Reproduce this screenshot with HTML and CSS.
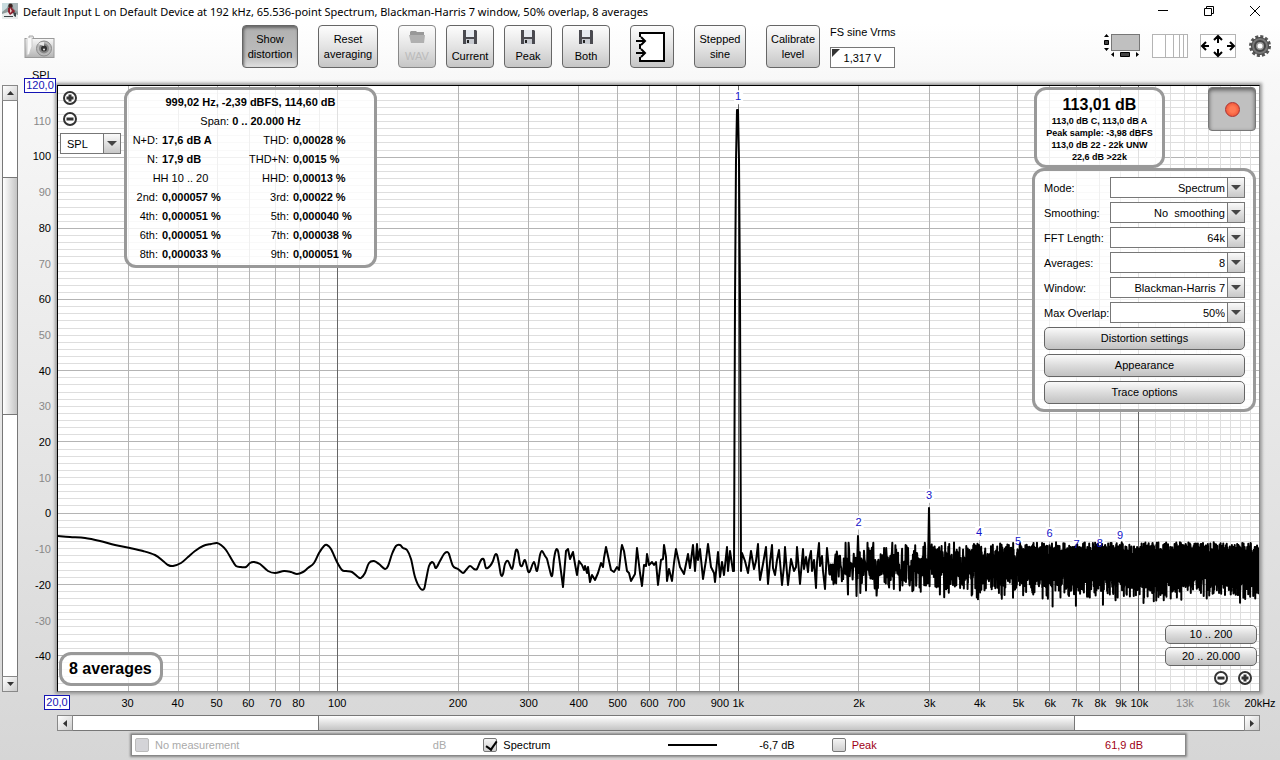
FILE: index.html
```html
<!DOCTYPE html>
<html lang="en">
  <head>
    <meta charset="UTF-8" />
    <meta name="viewport" content="width=device-width, initial-scale=1.0" />
    <title>RTA</title>
    <link rel="stylesheet" href="styles.css">
  </head>
  <body>
    <header class="titlebar">
      <svg class="app-icon" width="16" height="16" viewBox="0 0 16 16">
        <rect x="0" y="0" width="16" height="16" fill="#8d9a9a"></rect>
        <path d="M0 0h7l-2 5-5 4z" fill="#c9dcdf"></path>
        <path d="M10 0h6v9l-4-3z" fill="#a9b5b8"></path>
        <circle cx="8.500" cy="3" r="2.200" fill="#3a2220"></circle>
        <path d="M6 5l3-1 4 4-2 4H6z" fill="#8c2230"></path>
        <path d="M8 5l2 3-2 2z" fill="#e6cfc9"></path>
        <path d="M0 11l6-2 2 3 3-2 5 2v4H0z" fill="#e8ecec"></path>
        <path d="M2 13h9v1H2zM11 9l3 1v4l-2-1z" fill="#3c4446"></path>
      </svg>
      <span class="titlebar-text">Default Input L on Default Device at 192 kHz, 65.536-point Spectrum, Blackman-Harris 7 window, 50% overlap, 8 averages</span>
      <div class="window-buttons">
        <button class="plain" aria-label="Minimize">
          <svg width="12" height="12" viewBox="0 0 12 12" fill="none" stroke="#000"><path d="M1 5.500h10"></path></svg>
        </button>
        <button class="plain" aria-label="Restore">
          <svg width="12" height="12" viewBox="0 0 12 12" fill="none" stroke="#000"><path d="M1.500 3.500h7v7h-7zM3.500 3.500v-2h7v7h-2"></path></svg>
        </button>
        <button class="plain" aria-label="Close">
          <svg width="12" height="12" viewBox="0 0 12 12" fill="none" stroke="#000"><path d="M1 1l10 10M11 1L1 11"></path></svg>
        </button>
      </div>
    </header>

    <div class="toolbar">
      <button class="plain camera" aria-label="Capture image">
        <svg width="31" height="24" viewBox="0 0 31 24">
          <defs>
            <linearGradient id="cam" x1="0" y1="0" x2="0" y2="1">
              <stop offset="0" stop-color="#f8f8f8"></stop>
              <stop offset="1" stop-color="#b4b4b4"></stop>
            </linearGradient>
          </defs>
          <path d="M5 1h4l1 3H5z" fill="#e4e4e4" stroke="#aaa"></path>
          <rect x="1" y="3.500" width="29" height="19" fill="url(#cam)" stroke="#9a9a9a"></rect>
          <path d="M3 3v17c3 1 3-5 5-8V3" fill="#fafafa" stroke="#ccc"></path>
          <circle cx="20" cy="13.500" r="7.500" fill="#b9b9b9" stroke="#8a8a8a"></circle>
          <circle cx="20" cy="13.500" r="5" fill="#888"></circle>
          <circle cx="20" cy="13.500" r="3" fill="#333"></circle>
          <path d="M14 9a7 7 0 0 1 6-2v4z" fill="#e8e8e8"></path>
          <circle cx="20" cy="14.500" r="1" fill="#eee"></circle>
        </svg>
      </button>

      <div class="tools">
        <button class="tool pressed">Show<br>distortion</button>
        <button class="tool reset">Reset<br>averaging</button>
        <div class="save-tools">
          <button class="tool wav" disabled>
            <svg width="18" height="16" viewBox="0 0 18 16"><path d="M2 3l1-1h5l1 1h7v4H2z" fill="#989898"></path><path d="M1 6h16l-1 8H3z" fill="#b0b0b0"></path></svg>
            WAV
          </button>
          <button class="tool save">
            <svg width="16" height="16" viewBox="0 0 16 16"><path d="M1 1h13l1 1v13H1z" fill="#4a4a50"></path><path d="M4 1h8v7H4z" fill="#e6eaf0"></path><path d="M4 10h8v5H4z" fill="#c9ccd2"></path><path d="M5 11h2v3H5z" fill="#222"></path></svg>
            Current
          </button>
          <button class="tool save">
            <svg width="16" height="16" viewBox="0 0 16 16"><path d="M1 1h13l1 1v13H1z" fill="#4a4a50"></path><path d="M4 1h8v7H4z" fill="#e6eaf0"></path><path d="M4 10h8v5H4z" fill="#c9ccd2"></path><path d="M5 11h2v3H5z" fill="#222"></path></svg>
            Peak
          </button>
          <button class="tool save">
            <svg width="16" height="16" viewBox="0 0 16 16"><path d="M1 1h13l1 1v13H1z" fill="#4a4a50"></path><path d="M4 1h8v7H4z" fill="#e6eaf0"></path><path d="M4 10h8v5H4z" fill="#c9ccd2"></path><path d="M5 11h2v3H5z" fill="#222"></path></svg>
            Both
          </button>
        </div>
        <button class="tool inputs" aria-label="Input channels">
          <svg width="32" height="32" viewBox="0 0 32 32" fill="none" stroke="#000" stroke-width="2">
            <path d="M5 3h23v26H5z" fill="#fff" stroke="none"></path>
            <path d="M4 6V2h24v28H4v-4M4 13v5"></path>
            <path d="M0 10h9M5 6l4 4-4 4M0 22h9M5 18l4 4-4 4"></path>
          </svg>
        </button>
        <button class="tool stepped">Stepped<br>sine</button>
        <button class="tool calibrate">Calibrate<br>level</button>
        <div class="fs-sine">
          <label for="vrms">FS sine Vrms</label>
          <div class="vrms-box"><input id="vrms" type="text" value="1,317 V"></div>
        </div>
      </div>

      <div class="view-tools">
        <button class="plain" aria-label="Show scrollbars">
          <svg width="36" height="24" viewBox="0 0 36 24">
            <rect x="7.500" y="0.500" width="28" height="16" fill="#c0c0c0" stroke="#777"></rect>
            <path d="M0 3l2.500-3L5 3zM0 14l2.500 3L5 14zM10 18v5l-3-2.500zM32 18v5l3-2.500z" fill="#000"></path>
            <path d="M.500 6.500h4v4h-4zM16.500 18.500h9v4h-9z" fill="#444" stroke="#000"></path>
          </svg>
        </button>
        <button class="plain" aria-label="Frequency axis">
          <svg width="36" height="24" viewBox="0 0 36 24" fill="#fff" stroke="#b4b4b4">
            <rect x="0.500" y="0.500" width="35" height="23"></rect>
            <path d="M13.500 0v24M21.500 0v24M27.500 0v24M31.500 0v24"></path>
          </svg>
        </button>
        <button class="plain" aria-label="Graph limits">
          <svg width="36" height="24" viewBox="0 0 36 24">
            <rect x="0.500" y="0.500" width="35" height="23" fill="#fff" stroke="#b4b4b4"></rect>
            <path d="M2 12h7M6 8l-4 4 4 4M34 12h-7M30 8l4 4-4 4M18 2v7M14 6l4-4 4 4M18 22v-7M14 18l4 4 4-4" fill="none" stroke="#000" stroke-width="2"></path>
          </svg>
        </button>
        <button class="plain" aria-label="Settings">
          <svg width="24" height="24" viewBox="0 0 24 24">
            <circle cx="12" cy="12" r="9.500" fill="none" stroke="#555" stroke-width="3" stroke-dasharray="3 1.970"></circle>
            <circle cx="12" cy="12" r="8.500" fill="#777" stroke="#444"></circle>
            <circle cx="12" cy="12" r="5" fill="#999" stroke="#444" stroke-width="2"></circle>
            <circle cx="12" cy="12" r="2.500" fill="#fff"></circle>
          </svg>
        </button>
      </div>
    </div>

    <main class="graph">
      <div class="scrollbar vertical">
        <button class="scroll-btn" aria-label="Up"><svg width="7" height="4" viewBox="0 0 7 4"><path d="M0 4l3.500-4L7 4z"></path></svg></button>
        <div class="track"><div class="thumb" style="top: 13.400%; height: 41.200%"></div></div>
        <button class="scroll-btn" aria-label="Down"><svg width="7" height="4" viewBox="0 0 7 4"><path d="M0 0l3.500 4L7 0z"></path></svg></button>
      </div>

      <div class="y-axis">
        <span class="axis-title">SPL</span>
        <input class="limit limit-top" type="text" value="120,0" aria-label="Top limit">
        <svg id="yAxis" width="100%" height="100%"></svg>
      </div>

      <div class="plot">
        <svg id="plot" width="100%" height="100%"></svg>

        <div class="overlay y-zoom">
          <button class="plain" aria-label="Zoom in Y">
            <svg width="14" height="14" viewBox="0 0 14 14" fill="#fff" stroke="#333" stroke-width="2"><circle cx="7" cy="7" r="6"></circle><path d="M3.500 7h7M7 3.500v7" stroke-width="3"></path></svg>
          </button>
          <button class="plain" aria-label="Zoom out Y">
            <svg width="14" height="14" viewBox="0 0 14 14" fill="#fff" stroke="#333" stroke-width="2"><circle cx="7" cy="7" r="6"></circle><path d="M3.500 7h7" stroke-width="3"></path></svg>
          </button>
          <div class="select spl"><select aria-label="Y axis"><option>SPL</option></select></div>
        </div>

        <div class="overlay panel distortion">
          <b class="full">999,02 Hz, -2,39 dBFS, 114,60 dB</b>
          <span class="full">Span: <b>0 .. 20.000 Hz</b></span>
          <span class="name">N+D:</span><b>17,6 dB A</b><span class="name">THD:</span><b>0,00028 %</b>
          <span class="name">N:</span><b>17,9 dB</b><span class="name">THD+N:</span><b>0,0015 %</b>
          <span class="half">HH 10 .. 20</span><span class="name">HHD:</span><b>0,00013 %</b>
          <span class="name">2nd:</span><b>0,000057 %</b><span class="name">3rd:</span><b>0,00022 %</b>
          <span class="name">4th:</span><b>0,000051 %</b><span class="name">5th:</span><b>0,000040 %</b>
          <span class="name">6th:</span><b>0,000051 %</b><span class="name">7th:</span><b>0,000038 %</b>
          <span class="name">8th:</span><b>0,000033 %</b><span class="name">9th:</span><b>0,000051 %</b>
        </div>

        <div class="overlay controls">
          <div class="controls-top">
            <div class="panel level">
              <div class="level-main">113,01 dB</div>
              <div>113,0 dB C, 113,0 dB A</div>
              <div>Peak sample: -3,98 dBFS</div>
              <div>113,0 dB 22 - 22k UNW</div>
              <div>22,6 dB &gt;22k</div>
            </div>
            <button class="record" aria-label="Record"><span class="led"></span></button>
          </div>
          <div class="panel settings">
            <div class="row"><label for="mode">Mode:</label><div class="select"><select id="mode"><option>Spectrum</option></select></div></div>
            <div class="row"><label for="smoothing">Smoothing:</label><div class="select"><select id="smoothing"><option>No&nbsp; smoothing</option></select></div></div>
            <div class="row"><label for="fft">FFT Length:</label><div class="select"><select id="fft"><option>64k</option></select></div></div>
            <div class="row"><label for="averages">Averages:</label><div class="select"><select id="averages"><option>8</option></select></div></div>
            <div class="row"><label for="window">Window:</label><div class="select"><select id="window"><option>Blackman-Harris 7</option></select></div></div>
            <div class="row"><label for="overlap">Max Overlap:</label><div class="select"><select id="overlap"><option>50%</option></select></div></div>
            <button class="btn">Distortion settings</button>
            <button class="btn">Appearance</button>
            <button class="btn">Trace options</button>
          </div>
        </div>

        <div class="overlay panel averages">8 averages</div>

        <div class="overlay ranges">
          <button class="btn">10 .. 200</button>
          <button class="btn">20 .. 20.000</button>
          <div class="x-zoom">
            <button class="plain" aria-label="Zoom out X">
              <svg width="14" height="14" viewBox="0 0 14 14" fill="#fff" stroke="#333" stroke-width="2"><circle cx="7" cy="7" r="6"></circle><path d="M3.500 7h7" stroke-width="3"></path></svg>
            </button>
            <button class="plain" aria-label="Zoom in X">
              <svg width="14" height="14" viewBox="0 0 14 14" fill="#fff" stroke="#333" stroke-width="2"><circle cx="7" cy="7" r="6"></circle><path d="M3.500 7h7M7 3.500v7" stroke-width="3"></path></svg>
            </button>
          </div>
        </div>
      </div>

      <div class="x-axis">
        <input class="limit limit-left" type="text" value="20,0" aria-label="Left limit">
        <svg id="xAxis" width="100%" height="100%"></svg>
      </div>

      <div class="scrollbar horizontal">
        <button class="scroll-btn" aria-label="Left"><svg width="4" height="7" viewBox="0 0 4 7"><path d="M4 0L0 3.500 4 7z"></path></svg></button>
        <div class="track"><div class="thumb" style="left: 21%; width: 64.500%"></div></div>
        <button class="scroll-btn" aria-label="Right"><svg width="4" height="7" viewBox="0 0 4 7"><path d="M0 0l4 3.500L0 7z"></path></svg></button>
      </div>

      <div class="legend">
        <div class="trace off">
          <input id="t1" type="checkbox" disabled><label for="t1">No measurement</label>
          <span class="value">dB</span>
        </div>
        <div class="trace">
          <input id="t2" type="checkbox" checked><label for="t2">Spectrum</label>
          <span class="swatch"></span><span class="value">-6,7 dB</span>
        </div>
        <div class="trace peak">
          <input id="t3" type="checkbox"><label for="t3">Peak</label>
          <span class="value">61,9 dB</span>
        </div>
      </div>
    </main>

    <script src="script.js"></script>
  </body>
</html>
```

FILE: styles.css
```css
* {
  box-sizing: border-box;
}

body {
  margin: 0;
  min-height: 100vh;
  display: flex;
  flex-direction: column;
  background: linear-gradient(#fff 24px, #f8f8f8 80px, #d6d6d6);
  font-family: "Liberation Sans", Arial, sans-serif;
  font-size: 11px;
  line-height: 15px;
  color: #000;
}

button,
input,
select {
  font: inherit;
  color: inherit;
}

button {
  padding: 0;
}

.plain {
  border: none;
  background: none;
  display: block;
}

.plain svg {
  display: block;
}

/* title bar */

.titlebar {
  display: flex;
  align-items: center;
  height: 24px;
  padding: 0 19px 2px 2px;
  background: #fff;
  font-family: "Noto Sans", "Open Sans", sans-serif;
}

.app-icon {
  margin-right: 5px;
}

.titlebar-text {
  white-space: nowrap;
}

.window-buttons {
  margin-left: auto;
  display: flex;
  gap: 34px;
}

/* toolbar */

.toolbar {
  display: flex;
  height: 61px;
  padding: 1px 8px 0 24px;
}

.camera {
  align-self: flex-start;
  margin: 10px 187px 0 0;
}

.tools {
  display: flex;
  align-items: flex-start;
  gap: 20px;
}

.save-tools {
  display: flex;
  gap: 10px;
}

.tool {
  width: 56px;
  height: 43px;
  border: 1px solid #666;
  border-radius: 4px;
  background: linear-gradient(#fdfdfd, #e4e4e4 50%, #c6c6c6);
}

.tool svg {
  display: block;
  margin: 0 auto;
}

.pressed {
  background: linear-gradient(#b0b0b0, #bdbdbd 75%, #e0e0e0);
  box-shadow: inset 1px 2px 3px #666;
}

.reset {
  width: 60px;
}

.wav {
  width: 38px;
  color: #bbb;
  border-color: #888;
}

.save {
  width: 48px;
}

.wav svg,
.save svg {
  margin-bottom: 4px;
}

.inputs {
  width: 44px;
}

.stepped {
  width: 52px;
}

.calibrate {
  width: 54px;
}

.fs-sine {
  margin-left: -10px;
}

.vrms-box {
  position: relative;
  margin-top: 7px;
}

.vrms-box::before {
  content: "";
  position: absolute;
  left: 2px;
  top: 2px;
  border-top: 8px solid #333;
  border-right: 8px solid transparent;
}

.vrms-box input {
  display: block;
  width: 65px;
  height: 21px;
  border: 1px solid #777;
  background: #fff;
  text-align: center;
}

.view-tools {
  margin: 9px 0 0 auto;
  display: flex;
  align-items: flex-start;
  gap: 12px;
}

/* graph area */

.graph {
  flex: 1;
  display: grid;
  grid-template-columns: 16px 39px minmax(0, 1fr);
  grid-template-rows: minmax(500px, 1fr) 23px 16px 29px;
  padding: 0 20px 0 2px;
}

.scrollbar {
  display: flex;
  border: 1px solid #777;
  background: #fff;
}

.vertical {
  grid-row: 1;
  flex-direction: column;
}

.horizontal {
  grid-column: 3;
  grid-row: 3;
}

.scroll-btn {
  flex: 0 0 14px;
  display: flex;
  align-items: center;
  justify-content: center;
  border: none;
  background: linear-gradient(135deg, #fff, #ccc);
  outline: 1px solid #888;
}

.scroll-btn svg {
  fill: #333;
}

.track {
  position: relative;
  flex: 1;
}

.thumb {
  position: absolute;
  border: 0 solid #777;
}

.vertical .thumb {
  left: 0;
  right: 0;
  border-width: 1px 0;
  background: linear-gradient(90deg, #fff, #c4c4c4);
}

.horizontal .thumb {
  top: 0;
  bottom: 0;
  border-width: 0 1px;
  background: linear-gradient(#fff, #c4c4c4);
}

.y-axis {
  position: relative;
  grid-column: 2;
}

.x-axis {
  position: relative;
  grid-column: 3;
  grid-row: 2;
}

.y-axis svg,
.x-axis svg {
  display: block;
  position: absolute;
  overflow: visible;
}

.axis-title {
  position: absolute;
  left: 14px;
  top: -17px;
}

.limit {
  position: absolute;
  z-index: 1;
  height: 15px;
  padding: 0;
  border: 1px solid #1414b4;
  background: #fff;
  color: #1414b4;
  text-align: center;
}

.limit-top {
  left: 6px;
  top: -7px;
  width: 32px;
}

.limit-left {
  left: -13px;
  top: 3px;
  width: 26px;
}

.plot {
  position: relative;
  grid-column: 3;
  background: #fff;
  border: 1px solid #000;
  border-right-color: #888;
  border-bottom-color: #888;
  box-shadow: 0 0 3px 2px #999;
}

.plot > svg {
  display: block;
  position: absolute;
}

.label {
  fill: #000;
}

.label.faint {
  fill: #888;
}

.harmonic-gap {
  fill: #fff;
}

.harmonic {
  fill: #1414c8;
}

.line {
  stroke: #dedede;
  shape-rendering: crispEdges;
}

.line.main {
  stroke: #b4b4b4;
}

.line.decade {
  stroke: #666;
}

.spectrum {
  fill: none;
  stroke: #000;
  stroke-width: 2px;
  stroke-linejoin: round;
  vector-effect: non-scaling-stroke;
}

.overlay {
  position: absolute;
}

.panel {
  border: 3px solid #999;
  border-radius: 12px;
  background: rgba(255, 255, 255, 0.8);
}

.y-zoom {
  left: 2px;
  top: 5px;
  display: flex;
  flex-direction: column;
  gap: 7px;
}

.y-zoom .plain {
  margin-left: 3px;
}

.select {
  position: relative;
  height: 21px;
  border: 1px solid #777;
  background: #fff;
}

.select::after {
  content: "";
  position: absolute;
  top: 0;
  right: 0;
  width: 16px;
  height: 19px;
  border-left: 1px solid #777;
  background: linear-gradient(#fafafa, #c8c8c8);
  pointer-events: none;
}

.select::before {
  content: "";
  position: absolute;
  z-index: 1;
  top: 7px;
  right: 3px;
  border: 5px solid transparent;
  border-top-color: #444;
  border-bottom: none;
  pointer-events: none;
}

.select select {
  display: block;
  appearance: none;
  width: 100%;
  height: 19px;
  padding: 1px 19px 0 6px;
  border: none;
  background: none;
  text-align-last: right;
}

.spl {
  width: 61px;
}

.spl select {
  text-align-last: left;
}

.distortion {
  left: 66px;
  top: 1px;
  width: 253px;
  padding: 3px 0 1px;
  display: grid;
  grid-template-columns: 31px 72px 51px 1fr;
  grid-auto-rows: 19px;
  column-gap: 4px;
  line-height: 19px;
  white-space: nowrap;
}

.full {
  grid-column: 1 / -1;
  text-align: center;
}

.half {
  grid-column: 1 / 3;
  text-align: center;
}

.name {
  text-align: right;
}

.controls {
  right: 3px;
  top: 1px;
  width: 224px;
}

.controls-top {
  display: flex;
  align-items: flex-start;
  justify-content: space-between;
  padding-left: 2px;
}

.level {
  width: 131px;
  height: 81px;
  padding-top: 5px;
  font-size: 9px;
  font-weight: bold;
  line-height: 12px;
  text-align: center;
  white-space: nowrap;
}

.level-main {
  font-size: 16px;
  line-height: 20px;
}

.record {
  width: 48px;
  height: 44px;
  border: 1px solid #777;
  border-radius: 4px;
  background: #c0c0c0;
  box-shadow: inset 0 2px 4px #555;
}

.led {
  display: block;
  width: 15px;
  height: 15px;
  margin: 0 auto;
  border: 1px solid #a33;
  border-radius: 50%;
  background: radial-gradient(#ff7a55 30%, #e8452a);
}

.settings {
  display: flex;
  flex-direction: column;
  gap: 4px;
  padding: 6px 8px 5px 9px;
}

.row {
  display: grid;
  grid-template-columns: 66px 1fr;
  align-items: center;
  white-space: nowrap;
}

.row label {
  padding-top: 1px;
}

.btn {
  height: 23px;
  border: 1px solid #666;
  border-radius: 5px;
  background: linear-gradient(#fafafa, #dcdcdc 50%, #c2c2c2);
}

.averages {
  left: 1px;
  bottom: 5px;
  padding: 4px 8px 4px 7px;
  font-size: 16px;
  font-weight: bold;
  line-height: 20px;
}

.ranges {
  right: 2px;
  bottom: 6px;
  width: 92px;
  display: flex;
  flex-direction: column;
  gap: 3px;
}

.ranges .btn {
  height: 19px;
  line-height: 17px;
}

.x-zoom {
  display: flex;
  justify-content: flex-end;
  gap: 10px;
  padding: 2px 5px 0 0;
}

/* legend */

.legend {
  grid-column: 3;
  grid-row: 4;
  height: 22px;
  margin: 3px 74px 4px;
  padding: 0 6px 0 2px;
  display: grid;
  grid-template-columns: repeat(3, 1fr);
  background: #fff;
  border: 1px solid #888;
  box-shadow: 0 0 2px 1px #888;
}

.trace {
  display: flex;
  align-items: center;
}

.trace input {
  appearance: none;
  width: 14px;
  height: 14px;
  margin: 0 6px 0 1px;
  border: 1px solid #777;
  border-radius: 2px;
  background: linear-gradient(#f4f4f4, #cfcfcf);
}

.trace input:checked::before {
  content: "";
  display: block;
  width: 5px;
  height: 9px;
  margin: 0 0 0 4px;
  border: solid #000;
  border-width: 0 2px 2px 0;
  transform: rotate(35deg);
}

.trace input:disabled {
  border-color: #bbb;
  background: #d4d4d8;
}

.off {
  color: #aaa;
}

.peak {
  color: #a00014;
}

.value {
  width: 78px;
  margin-right: 36px;
  text-align: right;
}

.off .value,
.peak .value {
  margin-left: auto;
}

.swatch {
  width: 49px;
  height: 2px;
  margin-left: auto;
  background: #000;
}
```

FILE: script.js
```js
const SVG = "http://www.w3.org/2000/svg";
const F_MIN = 20;
const F_MAX = 20000;
const DB_MAX = 120;
const DB_MIN = -50;

const plot = document.getElementById("plot");
const xAxis = document.getElementById("xAxis");
const yAxis = document.getElementById("yAxis");

function add(parent, tag, attrs, text) {
  const el = document.createElementNS(SVG, tag);
  for (const key in attrs) el.setAttribute(key, attrs[key]);
  if (text !== undefined) el.textContent = text;
  parent.appendChild(el);
  return el;
}

function fx(f) {
  return (Math.log(f / F_MIN) / Math.log(F_MAX / F_MIN)) * 100;
}

function dy(db) {
  return ((DB_MAX - db) / (DB_MAX - DB_MIN)) * 100;
}

function vline(f, cls) {
  add(plot, "line", { x1: fx(f) + "%", x2: fx(f) + "%", y1: 0, y2: "100%", class: cls });
}

// horizontal grid, every 2 dB
for (let db = DB_MIN + 2; db < DB_MAX; db += 2) {
  if (db % 20 === 0) continue;
  add(plot, "line", { x1: 0, x2: "100%", y1: dy(db) + "%", y2: dy(db) + "%", class: "line" });
}
for (let db = -40; db < DB_MAX; db += 20) {
  add(plot, "line", { x1: 0, x2: "100%", y1: dy(db) + "%", y2: dy(db) + "%", class: "line main" });
}
for (let db = -40; db < DB_MAX; db += 10) {
  add(yAxis, "text", {
    x: 33, y: dy(db) + "%", dy: 4, "text-anchor": "end",
    class: db % 20 === 0 ? "label" : "label faint"
  }, db);
}

// vertical grid
for (let f = 11000; f < 20000; f += 1000) vline(f, "line");
for (const decade of [10, 100, 1000]) {
  for (let n = 2; n < 10; n++) {
    if (n * decade > F_MIN) vline(n * decade, "line main");
  }
  vline(decade * 10, "line decade");
}

const ticks = [
  [30, "30"], [40, "40"], [50, "50"], [60, "60"], [70, "70"], [80, "80"], [100, "100"],
  [200, "200"], [300, "300"], [400, "400"], [500, "500"], [600, "600"], [700, "700"],
  [900, "900"], [1000, "1k"], [2000, "2k"], [3000, "3k"], [4000, "4k"], [5000, "5k"],
  [6000, "6k"], [7000, "7k"], [8000, "8k"], [9000, "9k"], [10000, "10k"],
  [13000, "13k"], [16000, "16k"], [20000, "20kHz"]
];
for (const [f, text] of ticks) {
  add(xAxis, "text", {
    x: fx(f) + "%", y: 15, "text-anchor": "middle",
    class: f === 13000 || f === 16000 ? "label faint" : "label"
  }, text);
}

// spectrum trace
const low = `58,536 70,537 85,538 100,541 115,545 130,548 143,551 155,555 163,561 168,565 173,566
  181,563 188,557 195,551 203,546 211,544 217,543 221,545 226,550 232,560 236,566 241,567 246,567 250,563
  254,562 260,564 268,571 275,573 284,571 291,572 297,574 303,572 308,568 314,563 319,553 324,546
  327,545 331,549 337,562 342,570 346,571 352,572 358,577 361,578 365,573 369,563 374,561 379,564 385,569
  388,566 392,554 396,546 400,545 403,548 407,550 411,559 415,577 420,588 424,589 426,580 429,566
  432,562 434,564 436,568 440,561 444,554 447,552 449,554 453,566 458,569 463,573 466,570 470,566
  474,569 477,569 480,562 482,559 484,560 486,568 490,566 493,561 495,555 497,555 499,564 501,575
  503,574 505,564 508,561 512,569 514,560 516,550 518,552 520,564 522,566 525,560 528,571 530,571
  534,562 537,571 540,555 542,551 545,556 547,559 549,567 552,576 554,559 556,550 558,551 560,564`;
const high = `563,587 566,551 568,549 570,559 573,552 575,564 577,575 579,561 582,565 584,570 585,566
  587,573 588,567 590,582 592,575 595,580 598,573 601,563 603,567 604,558 606,547 608,556 611,570
  614,572 617,567 619,570 621,551 622,545 624,551 627,571 629,573 631,581 635,574 637,548 640,573
  642,586 644,565 646,566 647,554 649,565 652,562 654,565 656,562 658,585 661,560 663,559 664,545
  666,557 667,581 669,569 672,581 674,563 676,549 680,567 684,574 688,554 690,568 693,545 695,571
  697,544 698,560 700,549 703,579 706,560 708,544 711,567 714,573 715,582 718,552 720,577 722,562
  724,575 727,547 728,571 730,551 733,571 734,571 735,300 736,160 737,110 738,110 739,160
  740,300 741,571 742,553 745,561 748,573 751,551 754,569 756,561 758,544 759,566 760,580 763,564 766,547
  768,584 770,562 772,545 773,568 775,575 777,560 779,550 782,585 784,566 785,547 787,573 788,585 791,559
  794,571 796,567 797,547 800,584 803,549 804,569 806,557 808,572 809,560 811,551 812,571 814,560
  816,588 817,562 819,543 820,566 822,556 823,571 825,589 827,548`;

function parse(text) {
  return text.trim().split(/\s+/).map((pair) => pair.split(",").map(Number));
}

let seed = 7;
function random() {
  seed = (seed * 16807) % 2147483647;
  return seed / 2147483647;
}

const points = parse(low);
// smooth curve through the low frequency points
let path = "M" + points[0];
for (let i = 1; i < points.length; i++) {
  const a = points[i - 2] || points[i - 1];
  const b = points[i - 1];
  const c = points[i];
  const d = points[i + 1] || c;
  path += `C${b[0] + (c[0] - a[0]) / 6},${b[1] + (c[1] - a[1]) / 6} ` +
    `${c[0] - (d[0] - b[0]) / 6},${c[1] - (d[1] - b[1]) / 6} ${c}`;
}
for (const p of parse(high)) path += "L" + p;

// noise floor, bins get denser towards the right
const spikes = [[858, 536], [929, 508], [979, 545]];
for (let x = 828; x < 1259;) {
  const t = Math.min(1, (x - 828) / 330);
  const step = 0.06 + 0.64 * Math.pow(1 - t, 3);
  const gauss = random() + random() + random() - 1.5;
  let y = 566 + gauss * (24 + 2 * t);
  if (y > 582 && random() < 0.1) y += random() * 10;
  if (y < 546) y = 542 + random() * 9;
  path += `L${x.toFixed(2)},${y.toFixed(1)}`;
  x += step;
  if (spikes.length && x > spikes[0][0]) {
    const [sx, sy] = spikes.shift();
    path += `L${sx - 1},566L${sx},${sy}L${sx + 1},566`;
  }
}

// harmonic markers: number, level at which the number sits
const harmonics = [
  [1, 116], [2, -3.5], [3, 4], [4, -6.5], [5, -9],
  [6, -6.8], [7, -9.7], [8, -9.6], [9, -7.4]
];
for (const [n, db] of harmonics) {
  const gap = add(plot, "svg", { x: fx(n * 1000) + "%", y: dy(db) + "%", overflow: "visible" });
  add(gap, "rect", { x: -4, y: -10, width: 9, height: 14, class: "harmonic-gap" });
}

const curve = add(plot, "svg", {
  width: "100%", height: "100%", viewBox: "58 86 1201 605", preserveAspectRatio: "none"
});
add(curve, "path", { d: path, class: "spectrum" });

for (const [n, db] of harmonics) {
  add(plot, "text", {
    x: fx(n * 1000) + "%", y: dy(db) + "%", "text-anchor": "middle", class: "harmonic"
  }, n);
}
```
